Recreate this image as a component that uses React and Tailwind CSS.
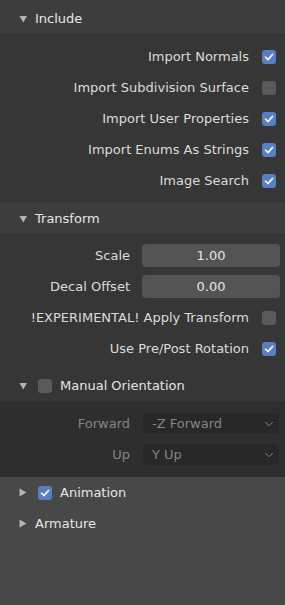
import { ChevronDown } from 'lucide-react';

const font = { fontFamily: '"DejaVu Sans", "Liberation Sans", sans-serif' };

function Check({ on }) {
    return (
        <span
            className={`flex h-[14px] w-[14px] items-center justify-center rounded-[3px] ${
                on ? 'bg-[#5680c2]' : 'bg-[#5a5a5a]'
            }`}
        >
            {on && (
                <svg width="10" height="10" viewBox="0 0 10 10" fill="none">
                    <path d="M1.5 5.2 L4 7.6 L8.6 2.4" stroke="#f2f2f2" strokeWidth="1.7" strokeLinecap="round" strokeLinejoin="round" />
                </svg>
            )}
        </span>
    );
}

function Arrow({ open }) {
    return open ? (
        <svg width="9" height="8" viewBox="0 0 9 8" className="shrink-0">
            <path d="M0.5 1 H8 L4.25 7.5 Z" fill="#b4b4b4" />
        </svg>
    ) : (
        <svg width="8" height="9" viewBox="0 0 8 9" className="shrink-0">
            <path d="M0.5 0.5 V8.5 L7.5 4.5 Z" fill="#b4b4b4" />
        </svg>
    );
}

function Header({ title, open, check, className = '' }) {
    return (
        <div className={`flex h-[31px] items-center pl-[19px] text-[#e6e6e6] ${className}`}>
            <span className="flex w-[16px]">
                <Arrow open={open} />
            </span>
            {check !== undefined && (
                <span className="mr-[8px] ml-[3px]">
                    <Check on={check} />
                </span>
            )}
            <span>{title}</span>
        </div>
    );
}

function CheckRow({ label, on }) {
    return (
        <div className="flex h-[31px] items-center justify-end pr-[9px]">
            <span className="mr-[13px] text-[#dcdcdc]">{label}</span>
            <Check on={on} />
        </div>
    );
}

function FieldRow({ label, value }) {
    return (
        <div className="flex h-[31px] items-center pr-[5px]">
            <span className="w-[130px] text-right text-[#dcdcdc]">{label}</span>
            <div className="ml-[12px] flex h-[23px] flex-1 items-center justify-center rounded-[4px] bg-[#545454] text-[#e6e6e6]">
                {value}
            </div>
        </div>
    );
}

function SelectRow({ label, value }) {
    return (
        <div className="flex h-[31px] items-center pr-[5px]">
            <span className="w-[130px] text-right text-[#858585]">{label}</span>
            <div className="ml-[12px] flex h-[23px] flex-1 items-center justify-between rounded-[4px] border border-[#303030] bg-[#282828] pl-[9px] pr-[3px] text-[#858585]">
                <span>{value}</span>
                <ChevronDown size={14} strokeWidth={1.6} color="#8a8a8a" />
            </div>
        </div>
    );
}

export default function App() {
    return (
        <div className="flex h-[605px] w-[285px] flex-col bg-[#484848] text-[13px] leading-none" style={font}>
            <Header title="Include" open className="h-[33px] bg-[#3d3d3d] pt-[4px]" />
            <div className="bg-[#363636] pt-[8px] pb-[6px]">
                <CheckRow label="Import Normals" on />
                <CheckRow label="Import Subdivision Surface" />
                <CheckRow label="Import User Properties" on />
                <CheckRow label="Import Enums As Strings" on />
                <CheckRow label="Image Search" on />
            </div>

            <Header title="Transform" open className="bg-[#3d3d3d] pt-[2px]" />
            <div className="bg-[#363636] pt-[7px]">
                <FieldRow label="Scale" value="1.00" />
                <FieldRow label="Decal Offset" value="0.00" />
                <CheckRow label="!EXPERIMENTAL! Apply Transform" />
                <CheckRow label="Use Pre/Post Rotation" on />
                <div className="h-[6px]" />
                <Header title="Manual Orientation" open check={false} />
            </div>
            <div className="bg-[#2e2e2e] pt-[7px] pb-[7px]">
                <SelectRow label="Forward" value="-Z Forward" />
                <SelectRow label="Up" value="Y Up" />
            </div>

            <Header title="Animation" check />
            <Header title="Armature" />
        </div>
    );
}
